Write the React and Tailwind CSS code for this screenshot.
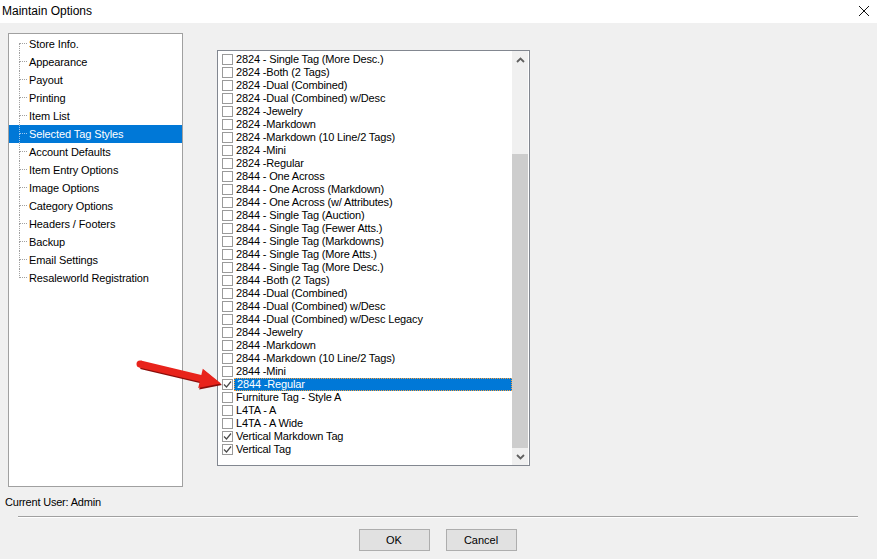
import React from 'react';

const treeItems = [
  'Store Info.',
  'Appearance',
  'Payout',
  'Printing',
  'Item List',
  'Selected Tag Styles',
  'Account Defaults',
  'Item Entry Options',
  'Image Options',
  'Category Options',
  'Headers / Footers',
  'Backup',
  'Email Settings',
  'Resaleworld Registration',
];

const tagStyles = [
  ['2824 - Single Tag (More Desc.)', false],
  ['2824 -Both (2 Tags)', false],
  ['2824 -Dual (Combined)', false],
  ['2824 -Dual (Combined) w/Desc', false],
  ['2824 -Jewelry', false],
  ['2824 -Markdown', false],
  ['2824 -Markdown (10 Line/2 Tags)', false],
  ['2824 -Mini', false],
  ['2824 -Regular', false],
  ['2844 - One Across', false],
  ['2844 - One Across (Markdown)', false],
  ['2844 - One Across (w/ Attributes)', false],
  ['2844 - Single Tag (Auction)', false],
  ['2844 - Single Tag (Fewer Atts.)', false],
  ['2844 - Single Tag (Markdowns)', false],
  ['2844 - Single Tag (More Atts.)', false],
  ['2844 - Single Tag (More Desc.)', false],
  ['2844 -Both (2 Tags)', false],
  ['2844 -Dual (Combined)', false],
  ['2844 -Dual (Combined) w/Desc', false],
  ['2844 -Dual (Combined) w/Desc Legacy', false],
  ['2844 -Jewelry', false],
  ['2844 -Markdown', false],
  ['2844 -Markdown (10 Line/2 Tags)', false],
  ['2844 -Mini', false],
  ['2844 -Regular', true],
  ['Furniture Tag - Style A', false],
  ['L4TA - A', false],
  ['L4TA - A Wide', false],
  ['Vertical Markdown Tag', true],
  ['Vertical Tag', true],
];

const SELECTED_TREE = 5;
const SELECTED_TAG = 25;

const TreeRow = ({ label, index, last }) => {
  const selected = index === SELECTED_TREE;
  const dot = selected ? 'border-[#9cc8f0]' : 'border-[#a0a0a0]';
  return (
    <div className={`flex h-[18px] items-center pl-[10px] ${selected ? 'bg-[#0078d7] text-white' : 'text-black'}`}>
      <div className="flex h-[18px] w-[8px] flex-col">
        <div className={`h-[9px] border-b border-dotted ${dot} ${index === 0 ? '' : 'border-l'}`} />
        <div className={`h-[9px] border-dotted ${dot} ${last ? '' : 'border-l'}`} />
      </div>
      <span className="pl-[2px] text-[11px] tracking-[-0.1px] leading-none">{label}</span>
    </div>
  );
};

const Check = () => (
  <svg width="9" height="9" viewBox="0 0 9 9" className="block">
    <polyline points="1,4.5 3.5,7 8,1.5" fill="none" stroke="#4a4a4a" strokeWidth="1.2" />
  </svg>
);

const TagRow = ({ label, checked, index }) => {
  const selected = index === SELECTED_TAG;
  return (
    <div className="flex h-[13px] items-center pl-[4px]">
      <div className="flex h-[11px] w-[11px] shrink-0 items-center justify-center border border-[#9a9a9a] bg-white">
        {checked && <Check />}
      </div>
      <div
        className={`ml-[1px] flex h-[13px] flex-1 items-center pl-[2px] text-[11px] tracking-[-0.15px] leading-none whitespace-nowrap ${
          selected ? 'border border-dotted border-[#f5a040] bg-[#0078d7] text-white' : 'text-black'
        }`}
      >
        {label}
      </div>
    </div>
  );
};

const Chevron = ({ up }) => (
  <svg width="9" height="6" viewBox="0 0 9 6">
    <polyline
      points={up ? '1,5 4.5,1.5 8,5' : '1,1 4.5,4.5 8,1'}
      fill="none"
      stroke="#606060"
      strokeWidth="1.8"
    />
  </svg>
);

export default function App() {
  return (
    <div className="relative h-[559px] w-[877px] overflow-hidden bg-[#f0f0f0] font-['Liberation_Sans',Arial,sans-serif]">
      {/* Title bar */}
      <div className="flex h-[23px] items-center justify-between bg-white pb-[2px] pl-[2px] pr-[7px]">
        <span className="text-[12px] text-black">Maintain Options</span>
        <svg width="12" height="12" viewBox="0 0 12 12">
          <path d="M1 1 L11 11 M11 1 L1 11" stroke="#111" strokeWidth="1" />
        </svg>
      </div>

      {/* Main */}
      <div className="flex pl-[8px] pt-[10px]">
        <div className="h-[454px] w-[175px] border border-[#a0a0a0] bg-white pt-[1px]">
          {treeItems.map((t, i) => (
            <TreeRow key={t} label={t} index={i} last={i === treeItems.length - 1} />
          ))}
        </div>

        <div className="ml-[34px] mt-[17px] flex h-[416px] w-[313px] border border-[#828790] bg-white">
          <div className="flex-1 pt-[2px]">
            {tagStyles.map(([t, c], i) => (
              <TagRow key={t} label={t} checked={c} index={i} />
            ))}
          </div>
          <div className="mr-[1px] flex w-[16px] flex-col bg-[#f0f0f0]">
            <div className="flex h-[17px] items-center justify-center">
              <Chevron up />
            </div>
            <div className="h-[86px]" />
            <div className="flex-1 bg-[#cdcdcd]" />
            <div className="flex h-[17px] items-center justify-center">
              <Chevron />
            </div>
          </div>
        </div>
      </div>

      {/* Footer */}
      <div className="mt-[7px] pl-[5px] text-[11px] tracking-[-0.2px] text-black">Current User: Admin</div>
      <div className="ml-[18px] mr-[19px] mt-[5px] border-t border-b border-t-[#a0a0a0] border-b-white" />
      <div className="mt-[11px] flex justify-center gap-[16px] pr-[2px]">
        <button className="h-[22px] w-[71px] border border-[#adadad] bg-[#e1e1e1] pt-[2px] text-[11px] text-black">OK</button>
        <button className="h-[22px] w-[71px] border border-[#adadad] bg-[#e1e1e1] pt-[2px] text-[11px] text-black">Cancel</button>
      </div>

      {/* Red arrow annotation */}
      <svg className="pointer-events-none absolute left-0 top-0" width="877" height="559" viewBox="0 0 877 559">
        <polygon
          points="140.8,360.6 201.3,375 202.8,368.7 221,383.5 198.2,388.1 199.7,381.8 139.2,367.4"
          fill="#8a0d0a"
          transform="translate(1,1.5)"
        />
        <polygon
          points="140.8,360.6 201.3,375 202.8,368.7 221,383.5 198.2,388.1 199.7,381.8 139.2,367.4"
          fill="#e8231b"
        />
        <circle cx="140" cy="364" r="3.5" fill="#e8231b" />
      </svg>
    </div>
  );
}
